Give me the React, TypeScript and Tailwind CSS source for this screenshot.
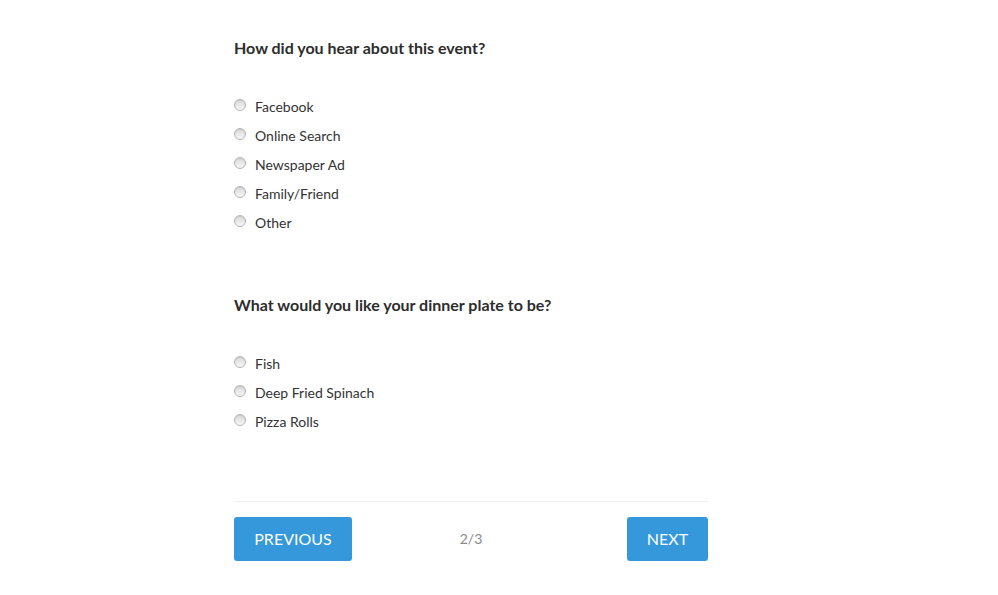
import React from "react";

const questions = [
  {
    title: "How did you hear about this event?",
    options: ["Facebook", "Online Search", "Newspaper Ad", "Family/Friend", "Other"],
  },
  {
    title: "What would you like your dinner plate to be?",
    options: ["Fish", "Deep Fried Spinach", "Pizza Rolls"],
  },
];

function Radio() {
  return (
    <span className="inline-block h-[12px] w-[12px] shrink-0 rounded-full border border-[#b5b5b5] bg-gradient-to-b from-[#d9d9d9] to-[#f7f7f7] shadow-[inset_0_1px_1px_rgba(0,0,0,0.08)]" />
  );
}

export default function App() {
  return (
    <div className="min-h-[595px] w-full bg-white font-['Lato','Open_Sans',sans-serif] text-[#333]">
      <div className="ml-[234px] w-[474px] pt-[38px]">
        {questions.map((q, qi) => (
          <div key={qi} className={qi > 0 ? "mt-[58px]" : ""}>
            <h2 className="h-[20px] text-[16px] font-bold leading-[20px] text-[#2d2d2d]">
              {q.title}
            </h2>
            <ul className="mt-[34px]">
              {q.options.map((opt) => (
                <li key={opt} className="flex h-[29px] items-center">
                  <span className="-mt-[3px] flex w-[21px]">
                    <Radio />
                  </span>
                  <span className="text-[14px] leading-[20px]">{opt}</span>
                </li>
              ))}
            </ul>
          </div>
        ))}
        <div className="mt-[65px] border-t border-[#eeeeee] pt-[15px]">
          <div className="flex items-center">
            <div className="flex flex-1">
              <button className="h-[44px] w-[118px] rounded-[3px] bg-[#3498db] text-[16px] text-white">
                PREVIOUS
              </button>
            </div>
            <span className="-mt-[2px] text-[14px] text-[#8a8a8a]">2/3</span>
            <div className="flex flex-1 justify-end">
              <button className="h-[44px] w-[81px] rounded-[3px] bg-[#3498db] text-[16px] text-white">
                NEXT
              </button>
            </div>
          </div>
        </div>
      </div>
    </div>
  );
}
